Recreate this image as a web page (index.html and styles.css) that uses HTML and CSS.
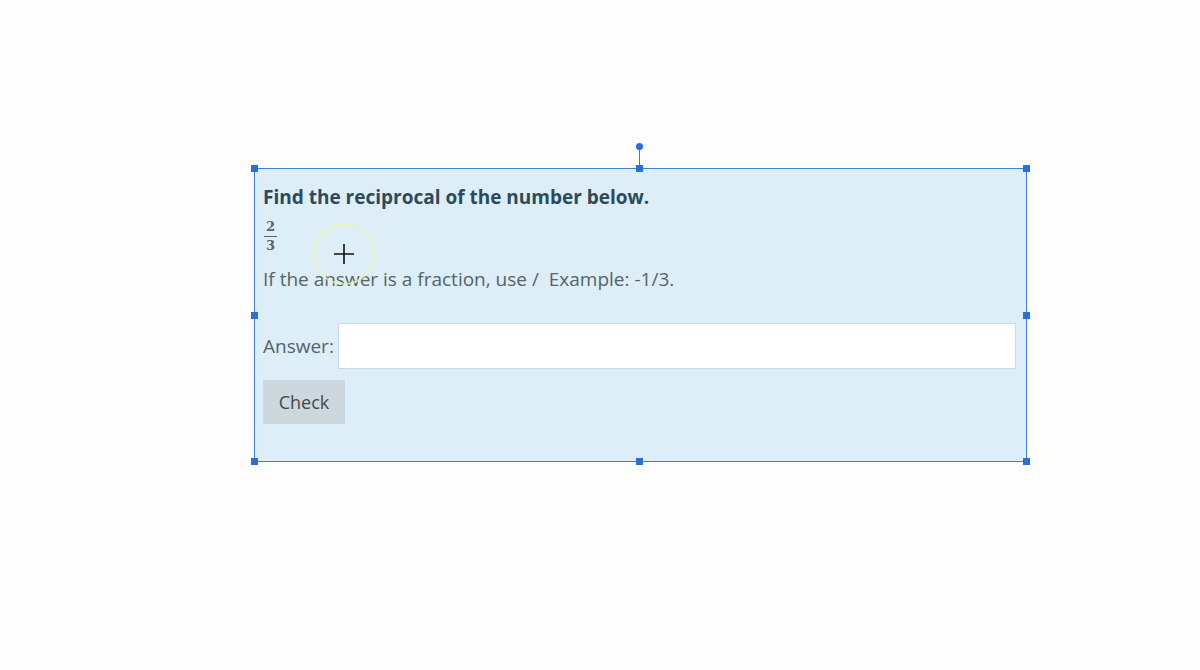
FILE: index.html
```html
<!DOCTYPE html>
<html>
<head>
<meta charset="utf-8">
<link rel="stylesheet" href="styles.css">
</head>
<body>
<div class="stage">
  <div class="box">
    <div class="question">
      <p class="title">Find the reciprocal of the number below.</p>
      <div class="frac"><span class="num">2</span><span class="den">3</span></div>
      <p class="hint">If the answer is a fraction, use /&nbsp; Example: -1/3.</p>
      <div class="answer-row">
        <label class="label" for="ans">Answer:</label>
        <input id="ans" class="input" type="text">
      </div>
      <button class="check">Check</button>
    </div>
    <span class="rot-line"></span>
    <span class="rot-dot"></span>
    <span class="h h-tl"></span><span class="h h-tm"></span><span class="h h-tr"></span>
    <span class="h h-ml"></span><span class="h h-mr"></span>
    <span class="h h-bl"></span><span class="h h-bm"></span><span class="h h-br"></span>
    <span class="cursor">
      <svg width="64" height="64" viewBox="0 0 64 64">
        <circle cx="32" cy="32" r="30" fill="none" stroke="#f1f5a8" stroke-width="2" opacity="0.7"/>
        <path d="M32 22 V42 M22 32 H42" stroke="#111" stroke-width="1.6"/>
      </svg>
    </span>
  </div>
</div>
</body>
</html>
```
FILE: styles.css
```css
html, body {
  margin: 0;
  padding: 0;
  background: #fdfdfd;
}
.stage {
  width: 1200px;
  height: 670px;
  padding-top: 168px;
  padding-left: 254px;
  box-sizing: border-box;
}
.box {
  position: relative;
  width: 773px;
  height: 294px;
  box-sizing: border-box;
  border: 1px solid #3d80d6;
  background: #ddeef8;
  font-family: "Open Sans", "Liberation Sans", sans-serif;
}
.question {
  padding: 15px 10px 0 8px;
  display: flex;
  flex-direction: column;
  align-items: flex-start;
}
.title {
  margin: 0;
  font-size: 19px;
  line-height: 26px;
  font-weight: 700;
  color: #2c4a58;
}
.frac {
  display: flex;
  flex-direction: column;
  align-items: center;
  margin-top: 10px;
  margin-left: 1px;
  font-family: "DejaVu Serif", "Liberation Serif", serif;
  font-weight: 700;
  font-size: 13px;
  line-height: 14px;
  color: #56646c;
}
.frac .num {
  border-bottom: 1px solid #56646c;
  padding: 0 2px 2px;
}
.frac .den {
  padding-top: 2px;
}
.hint {
  margin: 13px 0 0;
  font-size: 19px;
  line-height: 26px;
  color: #56636b;
}
.answer-row {
  display: flex;
  align-items: center;
  gap: 4px;
  margin-top: 31px;
  align-self: stretch;
}
.label {
  font-size: 19px;
  color: #56636b;
}
.input {
  flex: 1;
  height: 46px;
  box-sizing: border-box;
  border: 1px solid #c9dce6;
  background: #ffffff;
  margin: 0;
}
.check {
  margin-top: 11px;
  width: 82px;
  height: 44px;
  border: none;
  background: #cdd7de;
  font-family: "Open Sans", "Liberation Sans", sans-serif;
  font-size: 18px;
  color: #3f4a52;
  padding: 0;
}
.h {
  position: absolute;
  width: 7px;
  height: 7px;
  background: #2a6fd6;
}
.h-tl { left: -4px; top: -4px; }
.h-tm { left: 381px; top: -4px; }
.h-tr { right: -4px; top: -4px; }
.h-ml { left: -4px; top: 143px; }
.h-mr { right: -4px; top: 143px; }
.h-bl { left: -4px; bottom: -4px; }
.h-bm { left: 381px; bottom: -4px; }
.h-br { right: -4px; bottom: -4px; }
.rot-line {
  position: absolute;
  left: 384px;
  top: -22px;
  width: 1px;
  height: 20px;
  background: #3d80d6;
}
.rot-dot {
  position: absolute;
  left: 381px;
  top: -26px;
  width: 7px;
  height: 7px;
  border-radius: 50%;
  background: #2a6fd6;
}
.cursor {
  position: absolute;
  left: 57px;
  top: 53px;
  width: 64px;
  height: 64px;
}
.cursor svg { display: block; }
```
